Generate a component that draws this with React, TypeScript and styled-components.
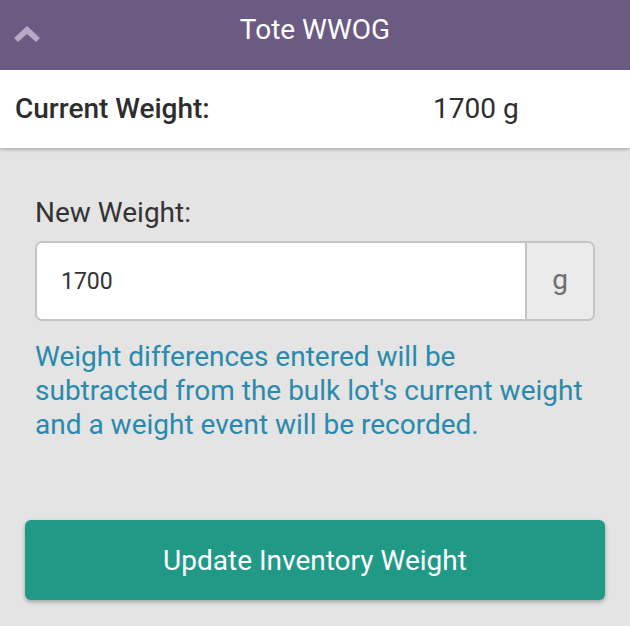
import styled, { createGlobalStyle } from 'styled-components';

const GlobalStyle = createGlobalStyle`
  html, body {
    margin: 0;
    padding: 0;
    background: #e4e4e4;
    font-family: Roboto, "Liberation Sans", sans-serif;
    color: #333;
  }
`;

const Page = styled.div`
  width: 630px;
  min-height: 626px;
  display: flex;
  flex-flow: column nowrap;
  background: #e4e4e4;
`;

const Header = styled.header`
  height: 70px;
  background: #6b5a82;
  display: grid;
  grid-template-columns: 60px 1fr 60px;
  align-items: center;
`;

const BackButton = styled.button`
  border: 0;
  background: none;
  padding: 0 0 0 14px;
  height: 70px;
  display: flex;
  align-items: center;
  cursor: pointer;
`;

const Title = styled.h1`
  margin: 0 0 10px;
  text-align: center;
  color: #fff;
  font-size: 28px;
  line-height: 32px;
  font-weight: 400;
`;

const CurrentRow = styled.div`
  height: 78px;
  background: #fff;
  display: grid;
  grid-template-columns: 418px 1fr;
  align-items: center;
  padding: 0 15px;
  box-shadow: 0 2px 3px rgba(0, 0, 0, 0.22);
  font-size: 28px;
  line-height: 32px;
  color: #2d2d2d;
`;

const CurrentLabel = styled.span`
  font-weight: 500;
`;

const CurrentValue = styled.span`
  font-weight: 400;
`;

const Form = styled.div`
  display: flex;
  flex-flow: column nowrap;
  padding: 49px 35px 0;
`;

const Label = styled.label`
  font-size: 28px;
  line-height: 32px;
  color: #333;
  margin-bottom: 12px;
`;

const InputGroup = styled.div`
  display: flex;
  height: 80px;
  box-sizing: border-box;
  border: 2px solid #c4c4c4;
  border-radius: 7px;
  overflow: hidden;
`;

const Input = styled.input`
  flex-grow: 1;
  border: 0;
  outline: none;
  padding: 0 0 0 24px;
  font-family: inherit;
  font-size: 23px;
  color: #333;
  background: #fff;
`;

const Addon = styled.span`
  width: 66px;
  border-left: 2px solid #c4c4c4;
  background: #ebebeb;
  color: #6e6e6e;
  font-size: 28px;
  display: flex;
  align-items: center;
  justify-content: center;
  padding-bottom: 4px;
`;

const Help = styled.p`
  margin: 19px 0 0;
  max-width: 555px;
  font-size: 28px;
  line-height: 34px;
  color: #2a8aad;
`;

const SubmitButton = styled.button`
  margin: 78px 25px 0;
  height: 80px;
  border: 0;
  border-radius: 6px;
  background: #219987;
  color: #fff;
  font-family: inherit;
  font-size: 28px;
  box-shadow: 0 2px 4px rgba(0, 0, 0, 0.3);
  cursor: pointer;
`;

function ChevronUp() {
  return (
    <svg width="28" height="20" viewBox="0 0 28 20">
      <path d="M0 13 L13 1 L26 13 L22 17 L13 9 L4 17 Z" fill="#b6aac8" />
    </svg>
  );
}

export default function App() {
  return (
    <Page>
      <GlobalStyle />
      <Header>
        <BackButton aria-label="Collapse">
          <ChevronUp />
        </BackButton>
        <Title>Tote WWOG</Title>
        <span />
      </Header>
      <CurrentRow>
        <CurrentLabel>Current Weight:</CurrentLabel>
        <CurrentValue>1700 g</CurrentValue>
      </CurrentRow>
      <Form>
        <Label htmlFor="new-weight">New Weight:</Label>
        <InputGroup>
          <Input id="new-weight" defaultValue="1700" />
          <Addon>g</Addon>
        </InputGroup>
        <Help>
          Weight differences entered will be subtracted from the bulk lot's
          current weight and a weight event will be recorded.
        </Help>
      </Form>
      <SubmitButton>Update Inventory Weight</SubmitButton>
    </Page>
  );
}
